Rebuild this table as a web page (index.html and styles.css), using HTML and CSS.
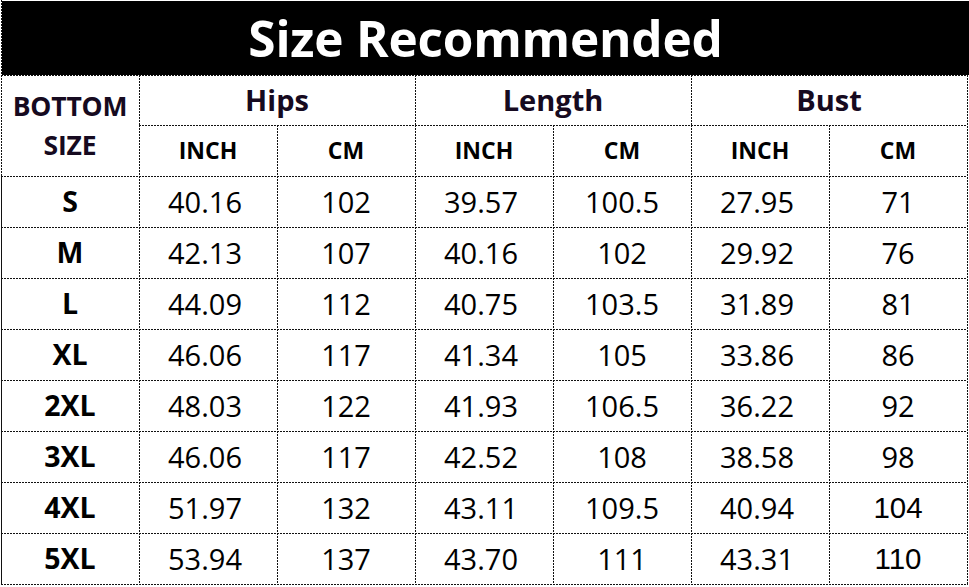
FILE: index.html
```html
<!DOCTYPE html>
<html lang="en">
<head>
<meta charset="utf-8">
<title>Size Recommended</title>
<link rel="stylesheet" href="styles.css">
</head>
<body>
<div class="sheet">
  <div class="title">Size Recommended</div>
  <div class="grid-wrap">
    <table class="grid">
      <colgroup>
        <col class="c"><col class="c"><col class="c"><col class="c"><col class="c"><col class="c"><col class="c">
      </colgroup>
      <thead>
        <tr class="h1">
          <th rowspan="2" class="bottom">BOTTOM<br>SIZE</th>
          <th colspan="2" class="group">Hips</th>
          <th colspan="2" class="group">Length</th>
          <th colspan="2" class="group">Bust</th>
        </tr>
        <tr class="h2">
          <th class="unit">INCH</th><th class="unit">CM</th>
          <th class="unit">INCH</th><th class="unit">CM</th>
          <th class="unit">INCH</th><th class="unit">CM</th>
        </tr>
      </thead>
      <tbody>
        <tr><th class="size">S</th><td>40.16</td><td>102</td><td>39.57</td><td>100.5</td><td>27.95</td><td>71</td></tr>
        <tr><th class="size">M</th><td>42.13</td><td>107</td><td>40.16</td><td>102</td><td>29.92</td><td>76</td></tr>
        <tr><th class="size">L</th><td>44.09</td><td>112</td><td>40.75</td><td>103.5</td><td>31.89</td><td>81</td></tr>
        <tr><th class="size">XL</th><td>46.06</td><td>117</td><td>41.34</td><td>105</td><td>33.86</td><td>86</td></tr>
        <tr><th class="size">2XL</th><td>48.03</td><td>122</td><td>41.93</td><td>106.5</td><td>36.22</td><td>92</td></tr>
        <tr><th class="size">3XL</th><td>46.06</td><td>117</td><td>42.52</td><td>108</td><td>38.58</td><td>98</td></tr>
        <tr><th class="size">4XL</th><td>51.97</td><td>132</td><td>43.11</td><td>109.5</td><td>40.94</td><td class="arial">104</td></tr>
        <tr><th class="size">5XL</th><td>53.94</td><td>137</td><td>43.70</td><td>111</td><td>43.31</td><td class="arial">110</td></tr>
      </tbody>
    </table>
  </div>
</div>
</body>
</html>
```
FILE: styles.css
```css
html, body {
  margin: 0;
  padding: 0;
  background: #fff;
}

body {
  font-family: "Open Sans", "Noto Sans", sans-serif;
  color: #000;
  overflow: hidden;
}

.sheet {
  margin-left: 1px;
  padding-top: 1px;
  width: 968px;
  background-image: repeating-linear-gradient(180deg, #111 0 2px, transparent 2px 3px);
  background-size: 1px 100%;
  background-repeat: no-repeat;
  background-position: left top;
}

.title {
  margin-left: 1px;
  height: 74px;
  background: #000;
  color: #fff;
  font-weight: 700;
  font-size: 49.5px;
  line-height: 74px;
  text-align: center;
  letter-spacing: -0.2px;
}

.grid-wrap {
  display: inline-block;
  padding-right: 1px;
  padding-bottom: 1px;
  vertical-align: top;
  background-image:
    repeating-linear-gradient(180deg, #111 0 2px, transparent 2px 3px),
    repeating-linear-gradient(90deg, #111 0 2px, transparent 2px 3px);
  background-size: 1px 100%, 100% 1px;
  background-position: right top, left bottom;
  background-repeat: no-repeat;
}

.grid {
  border-collapse: separate;
  border-spacing: 0;
  table-layout: fixed;
  width: 966px;
}

.c {
  width: 138px;
}

.grid th,
.grid td {
  padding: 0;
  text-align: center;
  vertical-align: middle;
  background-image:
    repeating-linear-gradient(90deg, #111 0 2px, transparent 2px 3px),
    repeating-linear-gradient(180deg, #111 0 2px, transparent 2px 3px);
  background-size: 100% 1px, 1px 100%;
  background-position: left top, left top;
  background-repeat: no-repeat;
  white-space: nowrap;
}

.h1 th {
  height: 50px;
}

.h2 th {
  height: 51px;
}

tbody tr th,
tbody tr td {
  height: 51px;
}

.bottom {
  color: #160a20;
  font-weight: 700;
  font-size: 26.5px;
  line-height: 39px;
  letter-spacing: -0.2px;
  padding-top: 2px;
}

.group {
  color: #160a20;
  font-weight: 700;
  font-size: 29px;
  line-height: 50px;
  padding-bottom: 4px;
}

.unit {
  font-weight: 700;
  font-size: 23px;
  line-height: 51px;
  padding-top: 2px;
}

.size {
  font-weight: 700;
  font-size: 28.5px;
  line-height: 51px;
}

.grid td {
  font-weight: 400;
  font-size: 29px;
  line-height: 51px;
}

.grid tbody td:nth-child(even) {
  padding-right: 6px;
}

.grid td.arial {
  font-family: "Liberation Sans", Arial, sans-serif;
  font-size: 29.5px;
}
```
